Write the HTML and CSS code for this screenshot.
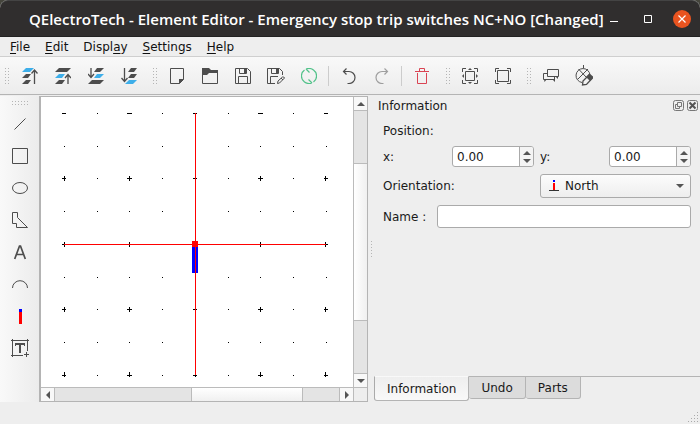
FILE: index.html
```html
<!DOCTYPE html>
<html lang="en">
<head>
<meta charset="utf-8">
<title>QElectroTech - Element Editor</title>
<link rel="stylesheet" href="styles.css">
</head>
<body>
<div class="window">
  <header class="titlebar">
    <h1 class="title">QElectroTech - Element Editor - Emergency stop trip switches NC+NO [Changed]</h1>
    <div class="window-buttons">
      <button class="win-btn" aria-label="Minimize"><svg width="18" height="18"><path d="M5 11.500h8" stroke="#fff"/></svg></button>
      <button class="win-btn" aria-label="Maximize"><svg width="18" height="18"><path d="M5.500 5.500h7v7h-7z" fill="none" stroke="#fff"/></svg></button>
      <button class="win-btn" aria-label="Close"><svg width="18" height="18"><circle cx="9" cy="9" r="9" fill="#e95420"/><path d="M5.500 5.500l7 7m0-7l-7 7" stroke="#fff" stroke-width="1.200"/></svg></button>
    </div>
  </header>

  <nav class="menubar">
    <button class="menu"><u>F</u>ile</button>
    <button class="menu"><u>E</u>dit</button>
    <button class="menu">Displ<u>a</u>y</button>
    <button class="menu"><u>S</u>ettings</button>
    <button class="menu"><u>H</u>elp</button>
  </nav>

  <div class="toolbar" role="toolbar" aria-label="Main">
    <span class="handle first"></span>
    <button class="tool" aria-label="Bring to front"><svg class="icon" viewBox="0 0 16 16"><path fill="#3daee9" d="M4 0h8l-4 4H0z"/><path fill="#4d4d4d" d="M4 6h5l-3 4H0zM4 12h5l-3 4H0z"/><path class="st" stroke-width="1.300" d="M12.500 16V2.500M9.500 5.500l3-3.500 3 3.500"/></svg></button>
    <button class="tool" aria-label="Raise"><svg class="icon" viewBox="0 0 16 16"><path fill="#4d4d4d" d="M4 0h12l-4 4H0z"/><path fill="#3daee9" d="M4 6h6l-3 4H0z"/><path fill="#4d4d4d" d="M4 12h6l-3 4H0z"/><path class="st" stroke-width="1.300" d="M13 16V7M10 10l3-3.500 3 3.500"/></svg></button>
    <button class="tool" aria-label="Lower"><svg class="icon" viewBox="0 0 16 16"><path fill="#4d4d4d" d="M9 0h7l-4 4H6z"/><path fill="#3daee9" d="M9 6h7l-4 4H6z"/><path fill="#4d4d4d" d="M4 12h12l-4 4H0z"/><path class="st" stroke-width="1.300" d="M3 0v9M0 6l3 3.500L6 6"/></svg></button>
    <button class="tool" aria-label="Send to back"><svg class="icon" viewBox="0 0 16 16"><path fill="#4d4d4d" d="M10 0h6l-3 4H7zM10 6h6l-3 4H7z"/><path fill="#3daee9" d="M8 12h8l-4 4H4z"/><path class="st" stroke-width="1.300" d="M3.500 0v13M.500 10l3 3.500 3-3.500"/></svg></button>
    <span class="handle"></span>
    <button class="tool" aria-label="New"><svg class="icon" viewBox="0 0 16 16"><path class="st" d="M1.500.500h13v11l-4 4h-9z"/><path fill="#4d4d4d" d="M10 11h5l-5 5z"/></svg></button>
    <button class="tool" aria-label="Open"><svg class="icon" viewBox="0 0 16 16"><path class="st" d="M.500.500h6l2 2h7v13H.500z"/><path fill="#4d4d4d" d="M0 0h7l2 2h7v3H7L5 7H0z"/></svg></button>
    <button class="tool" aria-label="Save"><svg class="icon" viewBox="0 0 16 16"><path class="st" d="M.500.500h12l3 3v12H.500zM4.500.500v5h7v-5M3.500 15.500v-7h9v7"/><path fill="#4d4d4d" d="M9 1h3v4H9z"/></svg></button>
    <button class="tool" aria-label="Save as"><svg class="icon wide" viewBox="0 0 18 16"><path class="st" d="M8 15.500H.500V.500h12l3 3V7M4.500.500v5h7v-5M3.500 15.500v-7H11"/><path fill="#4d4d4d" d="M9 1h3v4H9z"/><path class="st" d="M10.500 15.500l.5-2.500 4.500-4q1.500-.500 2 1l-5 5z M14 10l2 2"/></svg></button>
    <button class="tool" aria-label="Reload"><svg class="icon" viewBox="0 0 16 16"><path fill="none" stroke="#52c28a" stroke-width="1.200" d="M3.500 14A7.400 7.400 0 0 1 3.500 2M12.500 2a7.400 7.400 0 0 1 0 12M5 1q4-1.500 7.500 1M11 15q-4 1.500-7.500-1M8.500 4.500L5 1M7.500 11.500L11 15"/></svg></button>
    <span class="sep"></span>
    <button class="tool" aria-label="Undo"><svg class="icon" viewBox="0 0 16 16"><path class="st" stroke-width="1.200" d="M5.500.500l-3 3 3 3M2.500 3.500H8a6 6 0 0 1 0 12H6.500"/></svg></button>
    <button class="tool" aria-label="Redo"><svg class="icon faded" viewBox="0 0 16 16"><path class="st" stroke-width="1.200" d="M10.500.500l3 3-3 3M13.500 3.500H8a6 6 0 0 0 0 12h1.500"/></svg></button>
    <span class="sep"></span>
    <button class="tool" aria-label="Delete"><svg class="icon" viewBox="0 0 16 16"><path fill="none" stroke="#da4453" d="M1 3.500h14M5.500 3V.500h5V3M3.500 5v10.500h9V5"/></svg></button>
    <span class="handle"></span>
    <button class="tool" aria-label="Zoom fit"><svg class="icon" viewBox="0 0 16 16"><path class="st" d="M3.500 3.500h9v9h-9zM.500 4V.500H4M12 .500h3.500V4M.500 12v3.500H4M12 15.500h3.500V12"/><path fill="#4d4d4d" d="M6 2l2-2 2 2zM6 14l2 2 2-2zM2 6L0 8l2 2zM14 6l2 2-2 2z"/></svg></button>
    <button class="tool" aria-label="Zoom original"><svg class="icon" viewBox="0 0 16 16"><path class="st" d="M2.500 2.500h11v11h-11zM.500 4V.500H4M12 .500h3.500V4M.500 12v3.500H4M12 15.500h3.500V12"/></svg></button>
    <span class="handle"></span>
    <button class="tool" aria-label="Names"><svg class="icon" viewBox="0 0 16 16"><path class="st" d="M4.500 1.500h11v7h-11zM4.500 5.500h-4v6h11v-3"/><path fill="#4d4d4d" d="M1 11h3l-2.500 3zM12 8h3v3zM9 11h3v3z"/></svg></button>
    <button class="tool" aria-label="Edit element"><svg class="icon tall" viewBox="0 0 18 21"><path class="st" d="M8.500 0v3M13 4l-10 10M3.500 4l8 8.500M7 17.500A7 7 0 1 1 15 10"/><path class="st" stroke-width="1.300" d="M7.500 20l.5-4 6-6 3.500 3-6 6.500z"/><path fill="#4d4d4d" d="M11 12l3.500-3.500 4 3.500-3.500 4z"/></svg></button>
  </div>

  <div class="main">
    <div class="parts" role="toolbar" aria-label="Parts" aria-orientation="vertical">
      <span class="handle-h"></span>
      <button class="part" aria-label="Line"><svg class="icon" viewBox="0 0 16 16"><path class="st" d="M2.500 13.500l11-11"/></svg></button>
      <button class="part" aria-label="Rectangle"><svg class="icon" viewBox="0 0 16 16"><path class="st" d="M.500.500h15v15H.500z"/></svg></button>
      <button class="part" aria-label="Ellipse"><svg class="icon" viewBox="0 0 16 16"><ellipse class="st" cx="8" cy="8" rx="7.500" ry="5.500"/></svg></button>
      <button class="part" aria-label="Polygon"><svg class="icon" viewBox="0 0 16 16"><path class="st" d="M.500.500h5v5l10 10h-11v-4h-4z"/></svg></button>
      <button class="part" aria-label="Text"><svg class="icon" viewBox="0 0 16 16"><path class="st" stroke-width="1.700" d="M2.700 15L7.500 2h1l4.800 13M4.500 10.500h7"/></svg></button>
      <button class="part" aria-label="Arc"><svg class="icon" viewBox="0 0 16 16"><path class="st" d="M.500 12a7.500 7.300 0 0 1 15 0"/></svg></button>
      <button class="part" aria-label="Terminal"><svg class="icon" viewBox="0 0 16 16"><path fill="#00f" d="M7 1h3v3H7z"/><path fill="red" d="M7 4h3v12H7z"/></svg></button>
      <button class="part" aria-label="Text field"><svg class="icon wide" viewBox="0 0 18 18"><path class="st" d="M12 16.500H1.500v-15h15V12M0 1.500h18M0 16.500h3M1.500 0v18M16.500 0v3M13 15.500h5M15.500 13v5"/><path fill="#4d4d4d" d="M4 4h10v3h-1V6h-3v8H8V6H5v1H4z"/></svg></button>
    </div>

    <section class="view" aria-label="Element drawing">
      <div class="canvas">
        <svg class="sheet" width="312" height="290" viewBox="0 0 312 290" shape-rendering="crispEdges">
          <defs>
            <path id="dots" stroke="#000" d="M23 .500h1M56 .500h1M88 .500h1M121 .500h1M187 .500h1M219 .500h1M252 .500h1M285 .500h1"/>
            <path id="dashes" stroke="#000" d="M21 .500h4M56 .500h1M86 .500h5M121 .500h1M152 .500h4M187 .500h1M217 .500h5M252 .500h1M283 .500h4"/>
            <path id="ticks" stroke="#000" d="M23.500-2v5M88.500-2v5M154.500-2v5M219.500-2v5M284.500-2v5"/>
          </defs>
          <use href="#dashes" y="16"/>
          <use href="#dots" y="49"/>
          <use href="#dashes" y="81"/><use href="#ticks" y="81"/>
          <use href="#dots" y="114"/>
          <use href="#dashes" y="147"/><use href="#ticks" y="147"/>
          <use href="#dots" y="180"/>
          <use href="#dashes" y="212"/><use href="#ticks" y="212"/>
          <use href="#dots" y="245"/>
          <use href="#dashes" y="278"/><use href="#ticks" y="277"/>
          <path fill="#00f" d="M151 150h6v26h-6z"/>
          <path stroke="red" d="M23 147.500h262M154.500 16v262"/>
          <path fill="red" d="M151 144h6v6h-6z"/>
        </svg>
      </div>
      <div class="vbar">
        <button class="arrow" aria-label="Scroll up"><svg width="8" height="4"><path d="M0 4l4-4 4 4z"/></svg></button>
        <span class="groove"></span><span class="thumb"></span><span class="groove"></span>
        <button class="arrow" aria-label="Scroll down"><svg width="8" height="4"><path d="M0 0h8L4 4z"/></svg></button>
      </div>
      <div class="hbar">
        <button class="arrow" aria-label="Scroll left"><svg width="4" height="8"><path d="M4 0v8L0 4z"/></svg></button>
        <span class="groove left"></span><span class="thumb"></span><span class="groove right"></span>
        <button class="arrow" aria-label="Scroll right"><svg width="4" height="8"><path d="M0 0v8l4-4z"/></svg></button>
      </div>
      <div class="corner"></div>
    </section>

    <div class="splitter"><span class="splitter-dots"></span></div>

    <aside class="dock">
      <div class="dock-head">
        <h2 class="dock-title">Information</h2>
        <button class="dock-btn" aria-label="Float"><svg width="11" height="11" fill="none" stroke="#777"><rect x=".5" y=".5" width="10" height="10" rx="2"/><path d="M4.500 2.500h4v4h-4zM4 4.500H2.500v4h4V7"/></svg></button>
        <button class="dock-btn" aria-label="Close"><svg width="11" height="11" fill="none" stroke="#777"><rect x=".5" y=".5" width="10" height="10" rx="2"/><path stroke="#555" stroke-width="2" d="M2.500 2.500l6 6m0-6l-6 6"/></svg></button>
      </div>
      <form class="form">
        <div class="row heading">Position:</div>
        <div class="row position">
          <label for="x">x:</label>
          <div class="spin"><input id="x" type="text" value="0.00"><div class="steps"><button type="button" aria-label="Increase x"><svg width="8" height="4"><path d="M0 4l4-4 4 4z"/></svg></button><button type="button" aria-label="Decrease x"><svg width="8" height="4"><path d="M0 0h8L4 4z"/></svg></button></div></div>
          <label class="y-label" for="y">y:</label>
          <div class="spin"><input id="y" type="text" value="0.00"><div class="steps"><button type="button" aria-label="Increase y"><svg width="8" height="4"><path d="M0 4l4-4 4 4z"/></svg></button><button type="button" aria-label="Decrease y"><svg width="8" height="4"><path d="M0 0h8L4 4z"/></svg></button></div></div>
        </div>
        <div class="row orientation">
          <label for="orientation">Orientation:</label>
          <div class="combo">
            <select id="orientation"><option>North</option><option>East</option><option>South</option><option>West</option></select>
            <svg class="combo-icon" width="10" height="11"><path fill="#00f" d="M4 0h2v2H4z"/><path fill="red" d="M4 3h2v7H4z"/><path fill="#333" d="M0 10h10v1H0z"/></svg>
            <svg class="combo-arrow" width="8" height="4"><path d="M0 0h8L4 4z"/></svg>
          </div>
        </div>
        <div class="row name">
          <label for="name">Name :</label>
          <input id="name" class="name-input" type="text">
        </div>
      </form>
      <div class="tabs" role="tablist">
        <button class="tab active" role="tab" aria-selected="true">Information</button>
        <button class="tab" role="tab">Undo</button>
        <button class="tab" role="tab">Parts</button>
        <span class="tab-line"></span>
      </div>
    </aside>
  </div>

  <footer class="statusbar">
    <svg width="12" height="12" fill="#aaa"><path d="M9 0h1v1H9zM9 3h1v1H9zM9 6h1v1H9zM9 9h1v1H9zM6 3h1v1H6zM6 6h1v1H6zM6 9h1v1H6zM3 6h1v1H3zM3 9h1v1H3zM0 9h1v1H0z"/></svg>
  </footer>
</div>
</body>
</html>
```
FILE: styles.css
```css
* { box-sizing: border-box; }

body {
  margin: 0;
  background: #45453c;
  color: #1a1a1a;
  font: 12px/16px "DejaVu Sans", sans-serif;
}

button, input, select {
  margin: 0;
  padding: 0;
  border: 0;
  background: none;
  color: inherit;
  font: inherit;
}

svg { display: block; flex: none; }

.window {
  display: flex;
  flex-direction: column;
  min-height: 100vh;
  background: #eee;
  border-radius: 8px 8px 0 0;
}

/* Title bar */
.titlebar {
  display: flex;
  align-items: center;
  justify-content: space-between;
  height: 37px;
  padding: 0 9px 0 29px;
  background: #302e2e;
  border-top: 1px solid #444;
  border-bottom: 1px solid #222;
  border-radius: 8px 8px 0 0;
}

.title {
  margin: 0;
  color: #fff;
  font: 600 15px/20px "Open Sans", sans-serif;
  white-space: nowrap;
}

.window-buttons { display: flex; flex: none; gap: 16px; }
.win-btn { width: 18px; height: 18px; }

/* Menu bar */
.menubar {
  display: flex;
  gap: 15px;
  height: 20px;
  padding: 0 10px;
  border-bottom: 1px solid #cfcfcf;
}

.menu { height: 19px; color: #111; }
.menu u { text-underline-offset: 2px; }

/* Toolbars */
.toolbar {
  display: flex;
  align-items: center;
  height: 38px;
  border-bottom: 1px solid #b4b4b4;
  background: linear-gradient(#f9f9f9, #ececec);
}

.tool {
  display: flex;
  align-items: center;
  justify-content: center;
  width: 33px;
  height: 32px;
}

.icon { width: 16px; height: 16px; }
.icon.wide { width: 18px; }
.icon.tall { width: 18px; height: 21px; }
.part .icon.wide { height: 18px; }
.icon.faded { opacity: .5; }
.st { fill: none; stroke: #4d4d4d; }

/* Dotted grips: vertical stripes masked into single dots */
.handle, .handle-h, .splitter-dots {
  background: repeating-linear-gradient(90deg, #b5b5b5 0 1px, transparent 1px 3px);
  mask: repeating-linear-gradient(#000 0 1px, transparent 1px 3px);
}

.handle {
  width: 5px;
  height: 16px;
  margin: 0 3px 0 8px;
}
.handle.first { margin: 0 3px 0 5px; }
.handle + .tool { margin-left: -1px; }
.handle.first + .tool { margin-left: 0; }

.sep {
  width: 1px;
  height: 20px;
  margin: 0 3px;
  background: #ccc;
}

.main {
  display: flex;
  flex: 1;
  padding-top: 1px;
}

.parts {
  display: flex;
  flex-direction: column;
  align-items: center;
  width: 39px;
  padding: 5px 0 0 1px;
  background: linear-gradient(90deg, #f9f9f9, #ececec);
}

.handle-h {
  width: 17px;
  height: 5px;
  margin-bottom: 2px;
}

.part {
  display: flex;
  align-items: center;
  justify-content: center;
  width: 32px;
  height: 32px;
}

/* Drawing view */
.view {
  display: grid;
  flex: 1;
  grid-template: 1fr 14px / 1fr 14px;
  min-width: 0;
  border: 1px solid #b4b4b4;
  border-left-width: 2px;
}

.canvas { overflow: hidden; background: #fff; }

.vbar, .hbar { display: flex; background: #bbb; gap: 1px; }
.vbar { flex-direction: column; border-left: 1px solid #bbb; }
.hbar { border-top: 1px solid #bbb; }
.corner { border-top: 1px solid #bbb; border-left: 1px solid #bbb; }

.arrow {
  display: flex;
  flex: 0 0 13px;
  align-items: center;
  justify-content: center;
  background: #f8f8f8;
  fill: #555;
}

.groove { flex: 52; background: #e4e4e4; }
.groove.left { flex: 136; }
.groove.right { flex: 36; }
.vbar .thumb { flex: 156; background: linear-gradient(90deg, #fff, #f0f0f0); }
.hbar .thumb { flex: 110; background: linear-gradient(#fff, #f0f0f0); }

.splitter {
  display: flex;
  align-items: center;
  justify-content: center;
  width: 6px;
}
.splitter-dots { width: 1px; height: 16px; }

/* Information dock */
.dock {
  display: flex;
  flex: 0 0 326px;
  flex-direction: column;
}

.dock-head {
  display: flex;
  align-items: center;
  gap: 3px;
  height: 19px;
  padding: 0 2px 0 4px;
}

.dock-title { flex: 1; margin: 0; font: inherit; }
.dock-btn { width: 11px; height: 11px; }

.form {
  display: flex;
  flex: 1;
  flex-direction: column;
  gap: 7px;
  padding: 8px 9px 0;
}

.row { display: flex; align-items: center; }
.position { height: 21px; }
.position label { flex: 1; }
.position .y-label { margin-left: 6px; }

.spin {
  display: flex;
  width: 82px;
  height: 21px;
  border: 1px solid #aaa;
  border-radius: 3px;
  background: #fff;
  overflow: hidden;
}
.spin input { flex: 1; min-width: 0; padding-left: 4px; }

.steps {
  display: flex;
  flex-direction: column;
  justify-content: center;
  gap: 4px;
  width: 14px;
  border-left: 1px solid #aaa;
  background: #f4f4f4;
  fill: #555;
}
.steps button { display: flex; justify-content: center; height: 4px; }

.orientation { justify-content: space-between; }
.combo { position: relative; width: 151px; }

.combo select {
  display: block;
  width: 100%;
  height: 24px;
  padding-left: 24px;
  border: 1px solid #aaa;
  border-radius: 3px;
  background: linear-gradient(#fcfcfc, #eee);
  appearance: none;
}

.combo-icon, .combo-arrow { position: absolute; pointer-events: none; }
.combo-icon { left: 9px; top: 6px; }
.combo-arrow { right: 7px; top: 10px; fill: #555; }

.name { gap: 11px; }
.name-input {
  flex: 1;
  height: 23px;
  padding: 0 4px;
  border: 1px solid #aaa;
  border-radius: 3px;
  background: #fff;
}

/* Dock tabs */
.tabs { display: flex; align-items: flex-start; height: 26px; }

.tab {
  height: 23px;
  padding: 0 12px;
  border: 1px solid #b4b4b4;
  border-left: 0;
  border-radius: 0 0 3px 3px;
  background: #dcdcdc;
}

.tab.active {
  height: 25px;
  border-top-color: transparent;
  border-left: 1px solid #aaa;
  background: linear-gradient(#eee, #f9f9f9);
}

.tab-line { flex: 1; border-top: 1px solid #b4b4b4; }

.statusbar {
  display: flex;
  align-items: flex-end;
  justify-content: flex-end;
  height: 22px;
}
```
